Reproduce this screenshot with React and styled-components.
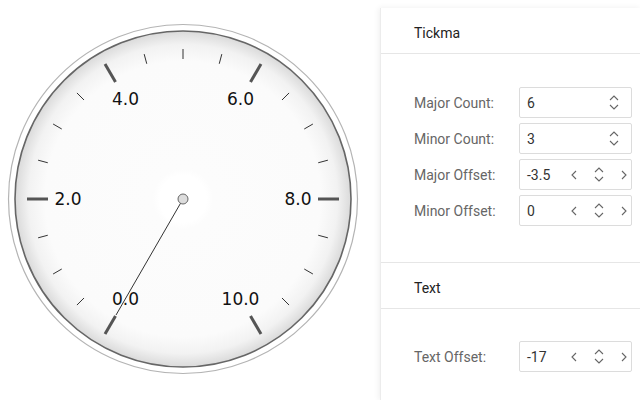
import React from "react";
import styled, { createGlobalStyle } from "styled-components";

const GlobalStyle = createGlobalStyle`
  html, body {
    margin: 0;
    padding: 0;
    background: #fff;
    overflow: hidden;
  }
  body {
    font-family: Roboto, "Liberation Sans", sans-serif;
  }
`;

const CX = 183;
const CY = 199;

const polar = (r, deg) => {
  const a = (deg * Math.PI) / 180;
  return [CX + r * Math.cos(a), CY - r * Math.sin(a)];
};

const valueAngle = (v) => 240 - 30 * v;

const Gauge = () => {
  const majors = [0, 2, 4, 6, 8, 10];
  const minors = [];
  for (let k = 0; k <= 20; k++) {
    if (k % 4 !== 0) minors.push(k * 0.5);
  }
  const needle = polar(134, valueAngle(0));

  return (
    <GaugeBox>
      <svg width="380" height="400" viewBox="0 0 380 400">
        <defs>
          <radialGradient id="face" cx="50%" cy="50%" r="50%">
            <stop offset="0%" stopColor="#ffffff" />
            <stop offset="14%" stopColor="#ffffff" />
            <stop offset="18%" stopColor="#fcfcfc" />
            <stop offset="82%" stopColor="#fbfbfb" />
            <stop offset="92%" stopColor="#f2f2f2" />
            <stop offset="100%" stopColor="#dadada" />
          </radialGradient>
        </defs>
        <circle cx={CX} cy={CY} r="174.5" fill="#fff" stroke="#b4b4b4" strokeWidth="1.2" />
        <circle cx={CX} cy={CY} r="168" fill="url(#face)" stroke="#666" strokeWidth="1.6" />

        {minors.map((v) => {
          const [x1, y1] = polar(140, valueAngle(v));
          const [x2, y2] = polar(150, valueAngle(v));
          return <line key={v} x1={x1} y1={y1} x2={x2} y2={y2} stroke="#333" strokeWidth="1" />;
        })}

        {majors.map((v) => {
          const [x1, y1] = polar(135, valueAngle(v));
          const [x2, y2] = polar(156, valueAngle(v));
          return <line key={v} x1={x1} y1={y1} x2={x2} y2={y2} stroke="#555" strokeWidth="3" />;
        })}

        {majors.map((v) => {
          const [x, y] = polar(115, valueAngle(v));
          return (
            <GaugeLabel key={v} x={x} y={y} textAnchor="middle" dominantBaseline="central">
              {v.toFixed(1)}
            </GaugeLabel>
          );
        })}

        <line x1={CX} y1={CY} x2={needle[0]} y2={needle[1]} stroke="#333" strokeWidth="1" />
        <circle cx={CX} cy={CY} r="5" fill="#dcdcdc" stroke="#666" strokeWidth="1" />
      </svg>
    </GaugeBox>
  );
};

const Chevron = ({ dir }) => {
  const paths = {
    up: "M1 5 L5 1 L9 5",
    down: "M1 1 L5 5 L9 1",
    left: "M5 1 L1 5 L5 9",
    right: "M1 1 L5 5 L1 9",
  };
  const vertical = dir === "up" || dir === "down";
  return (
    <svg
      width={vertical ? 10 : 6}
      height={vertical ? 6 : 10}
      viewBox={vertical ? "0 0 10 6" : "0 0 6 10"}
    >
      <path d={paths[dir]} fill="none" stroke="#666" strokeWidth="1.1" />
    </svg>
  );
};

const Spinner = ({ value, stepper }) => (
  <InputBox>
    <Value>{value}</Value>
    {stepper && (
      <Arrow>
        <Chevron dir="left" />
      </Arrow>
    )}
    <UpDown $wide={stepper}>
      <Chevron dir="up" />
      <Chevron dir="down" />
    </UpDown>
    {stepper && (
      <Arrow>
        <Chevron dir="right" />
      </Arrow>
    )}
  </InputBox>
);

const Field = ({ label, value, stepper }) => (
  <Row>
    <Label>{label}</Label>
    <Spinner value={value} stepper={stepper} />
  </Row>
);

const App = () => {
  return (
    <>
      <GlobalStyle />
      <Page>
        <Gauge />
        <Panel>
          <SectionHeader>Tickma</SectionHeader>
          <SectionBody>
            <Field label="Major Count:" value="6" />
            <Field label="Minor Count:" value="3" />
            <Field label="Major Offset:" value="-3.5" stepper />
            <Field label="Minor Offset:" value="0" stepper />
          </SectionBody>
          <SectionHeader $divided>Text</SectionHeader>
          <SectionBody $tight>
            <Field label="Text Offset:" value="-17" stepper />
          </SectionBody>
        </Panel>
      </Page>
    </>
  );
};

const Page = styled.div`
  display: flex;
  width: 640px;
  height: 400px;
  overflow: hidden;
`;

const GaugeBox = styled.div`
  width: 380px;
  flex: none;
  svg {
    display: block;
  }
`;

const GaugeLabel = styled.text`
  font-family: "DejaVu Sans", Verdana, sans-serif;
  font-size: 17px;
  fill: #111;
`;

const Panel = styled.div`
  flex: 1;
  margin-top: 8px;
  background: #fff;
  border-left: 1px solid #ececec;
  box-shadow: -1px 0 6px rgba(0, 0, 0, 0.07);
`;

const SectionHeader = styled.div`
  height: 41px;
  padding: 4px 0 0 33px;
  display: flex;
  align-items: center;
  font-size: 14px;
  font-weight: 400;
  color: #222;
  border-bottom: 1px solid #e6e6e6;
  border-top: ${(p) => (p.$divided ? "1px solid #e6e6e6" : "none")};
`;

const SectionBody = styled.div`
  display: flex;
  flex-direction: column;
  gap: 5px;
  padding: ${(p) => (p.$tight ? "32px" : "33px")} 0 36px 33px;
`;

const Row = styled.div`
  display: flex;
  align-items: center;
`;

const Label = styled.div`
  width: 105px;
  font-size: 14px;
  color: #666;
`;

const InputBox = styled.div`
  width: 113px;
  height: 31px;
  box-sizing: border-box;
  border: 1px solid #dcdcdc;
  border-radius: 2px;
  display: flex;
  align-items: center;
  padding: 0 0 0 7px;
`;

const Value = styled.div`
  flex: 1;
  font-size: 14px;
  color: #333;
`;

const Arrow = styled.div`
  width: 14px;
  display: flex;
  justify-content: center;
  align-items: center;
`;

const UpDown = styled.div`
  display: flex;
  flex-direction: column;
  align-items: center;
  gap: 3px;
  width: ${(p) => (p.$wide ? "36px" : "34px")};
`;

export default App;
